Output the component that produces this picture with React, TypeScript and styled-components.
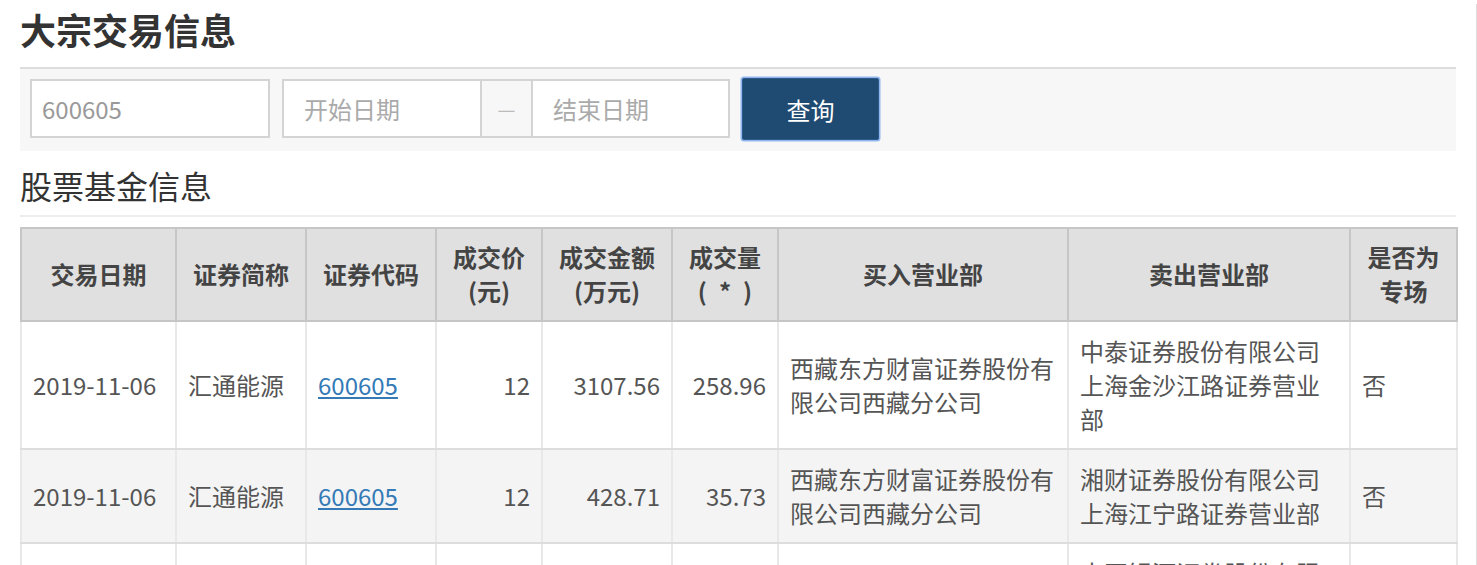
import React from "react";
import styled, { createGlobalStyle } from "styled-components";

const Global = createGlobalStyle`
  html, body { margin: 0; padding: 0; background: #fff; }
  body { font-family: "Noto Sans CJK SC", "Noto Sans", sans-serif; color: #555; }
  * { box-sizing: border-box; }
`;

const Page = styled.div`
  width: 100%;
  min-height: 565px;
  padding: 0 20px;
  border-right: 1px solid #dddddd;
`;

const Title = styled.h1`
  margin: 4px 0 13px;
  font-size: 36px;
  line-height: 50px;
  font-weight: 700;
  color: #333;
`;

const SearchBar = styled.div`
  display: flex;
  align-items: flex-start;
  gap: 12px;
  background: #f7f7f7;
  border-top: 2px solid #dddddd;
  padding: 10px 10px 11px;
`;

const TextInput = styled.input<{ $w: number }>`
  width: ${(p) => p.$w}px;
  height: 59px;
  border: 2px solid #d4d4d4;
  background: #fff;
  padding: 0 10px;
  font-family: "Noto Sans CJK SC", "Noto Sans", sans-serif;
  font-size: 24px;
  color: #999;
  outline: none;
  &::placeholder { color: #aaa; }
`;

const DateGroup = styled.div`
  display: flex;
  height: 59px;
`;

const DateInput = styled(TextInput)`
  padding: 0 20px;
`;

const Addon = styled.span`
  width: 49px;
  height: 59px;
  display: flex;
  align-items: center;
  justify-content: center;
  background: #f7f7f7;
  border-top: 2px solid #d4d4d4;
  border-bottom: 2px solid #d4d4d4;
  color: #bbb;
  font-size: 20px;
`;

const QueryButton = styled.button`
  margin-top: -1px;
  width: 137px;
  height: 62px;
  background: #1f4a71;
  border: 1px solid #2d5a86;
  box-shadow: 0 0 0 1.5px #8fb6ee;
  border-radius: 2px;
  color: #fff;
  font-family: "Noto Sans CJK SC", "Noto Sans", sans-serif;
  font-size: 24px;
  cursor: pointer;
`;

const SubTitle = styled.h2`
  margin: 12px 0 10px;
  padding-bottom: 8px;
  border-bottom: 2px solid #eeeeee;
  font-size: 32px;
  line-height: 44px;
  font-weight: 400;
  color: #333;
`;

const Table = styled.table`
  width: 1436px;
  table-layout: fixed;
  border-collapse: collapse;
  font-size: 24px;
  line-height: 34px;
`;

const Th = styled.th`
  background: #e0e0e0;
  border: 2px solid #c6c6c6;
  padding: 11px 6px 12px;
  font-weight: 700;
  color: #444;
  text-align: center;
  vertical-align: middle;
`;

const Row = styled.tr<{ $striped: boolean }>`
  background: ${(p) => (p.$striped ? "#f4f4f4" : "#ffffff")};
`;

const Td = styled.td<{ $right?: boolean }>`
  border-left: 2px solid #e8e8e8;
  border-right: 2px solid #e8e8e8;
  border-top: 2px solid #dddddd;
  border-bottom: 2px solid #dddddd;
  padding: 12px 11px;
  color: #555;
  vertical-align: middle;
  text-align: ${(p) => (p.$right ? "right" : "left")};
  word-break: break-all;
`;

const CodeLink = styled.a`
  color: #337ab7;
  text-decoration: underline;
`;

const widths = [155, 130, 130, 106, 130, 106, 290, 282, 107];

const rows = [
  {
    date: "2019-11-06",
    name: "汇通能源",
    code: "600605",
    price: "12",
    amount: "3107.56",
    volume: "258.96",
    buyer: "西藏东方财富证券股份有限公司西藏分公司",
    seller: "中泰证券股份有限公司上海金沙江路证券营业部",
    special: "否",
  },
  {
    date: "2019-11-06",
    name: "汇通能源",
    code: "600605",
    price: "12",
    amount: "428.71",
    volume: "35.73",
    buyer: "西藏东方财富证券股份有限公司西藏分公司",
    seller: "湘财证券股份有限公司上海江宁路证券营业部",
    special: "否",
  },
  {
    date: "2019-11-06",
    name: "汇通能源",
    code: "600605",
    price: "12",
    amount: "1200.00",
    volume: "100.00",
    buyer: "西藏东方财富证券股份有限公司西藏分公司",
    seller: "中国银河证券股份有限公司上海漕溪北路证券营业部",
    special: "否",
  },
];

export default function App() {
  return (
    <Page>
      <Global />
      <Title>大宗交易信息</Title>
      <SearchBar>
        <TextInput $w={240} defaultValue="600605" />
        <DateGroup>
          <DateInput $w={200} placeholder="开始日期" />
          <Addon>—</Addon>
          <DateInput $w={199} placeholder="结束日期" />
        </DateGroup>
        <QueryButton>查询</QueryButton>
      </SearchBar>
      <SubTitle>股票基金信息</SubTitle>
      <Table>
        <colgroup>
          {widths.map((w, i) => (
            <col key={i} style={{ width: w }} />
          ))}
        </colgroup>
        <thead>
          <tr>
            <Th>交易日期</Th>
            <Th>证券简称</Th>
            <Th>证券代码</Th>
            <Th>
              成交价
              <br />
              (元)
            </Th>
            <Th>
              成交金额
              <br />
              (万元)
            </Th>
            <Th>
              成交量
              <br />
              {"(\u2002*\u2002)"}
            </Th>
            <Th>买入营业部</Th>
            <Th>卖出营业部</Th>
            <Th>
              是否为
              <br />
              专场
            </Th>
          </tr>
        </thead>
        <tbody>
          {rows.map((r, i) => (
            <Row key={i} $striped={i % 2 === 1}>
              <Td>{r.date}</Td>
              <Td>{r.name}</Td>
              <Td>
                <CodeLink href="#">{r.code}</CodeLink>
              </Td>
              <Td $right>{r.price}</Td>
              <Td $right>{r.amount}</Td>
              <Td $right>{r.volume}</Td>
              <Td>{r.buyer}</Td>
              <Td>{r.seller}</Td>
              <Td>{r.special}</Td>
            </Row>
          ))}
        </tbody>
      </Table>
    </Page>
  );
}
